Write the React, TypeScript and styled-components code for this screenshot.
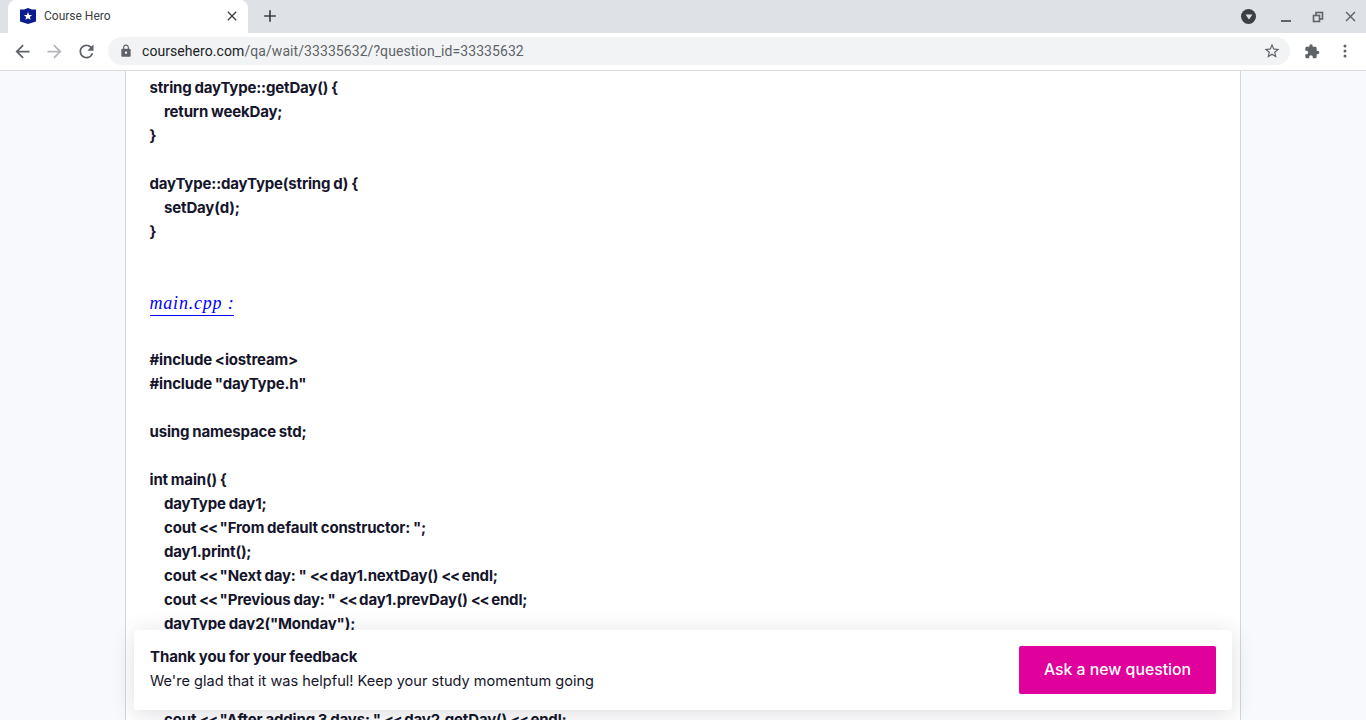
import React from 'react';
import styled, { createGlobalStyle } from 'styled-components';
import {
  MdAdd,
  MdArrowBack,
  MdArrowForward,
  MdClose,
  MdExtension,
  MdLock,
  MdRefresh,
  MdStarBorder,
} from 'react-icons/md';

const GlobalStyle = createGlobalStyle`
  html, body {
    margin: 0;
    padding: 0;
    height: 100%;
    overflow: hidden;
    background: #f8f9fc;
  }
  * { box-sizing: border-box; }
`;

const Window = styled.div`
  width: 1366px;
  height: 720px;
  display: flex;
  flex-direction: column;
  overflow: hidden;
  position: relative;
  font-family: Inter, "Liberation Sans", sans-serif;
`;

const TabStrip = styled.div`
  height: 33px;
  flex: none;
  background: #dee1e6;
  display: flex;
  align-items: flex-end;
  padding-left: 8px;
`;

const Tab = styled.div`
  width: 240px;
  height: 33px;
  background: #fff;
  border-radius: 8px 8px 0 0;
  display: flex;
  align-items: center;
  padding: 0 8px 1px 12px;
  font-family: Roboto, sans-serif;
  font-size: 12px;
  color: #3c4043;
`;

const TabTitle = styled.span`
  margin-left: 8px;
  flex: 1;
`;

const NewTab = styled.div`
  width: 28px;
  height: 28px;
  margin: 0 0 2px 8px;
  align-self: center;
  display: flex;
  align-items: center;
  justify-content: center;
  color: #3c4043;
`;

const WindowControls = styled.div`
  margin-left: auto;
  height: 33px;
  display: flex;
  align-items: center;
  color: #5f6368;
`;

const ProfileDot = styled.div`
  width: 15px;
  height: 15px;
  margin-right: 14px;
  border-radius: 50%;
  background: #3c4043;
  display: flex;
  align-items: center;
  justify-content: center;
`;

const ControlSlot = styled.div`
  width: 32px;
  height: 33px;
  display: flex;
  align-items: center;
  justify-content: center;
`;

const MinimizeBar = styled.div`
  width: 10px;
  height: 2px;
  margin-top: 9px;
  background: #5f6368;
`;

const Toolbar = styled.div`
  height: 38px;
  flex: none;
  background: #fff;
  border-bottom: 1px solid #dadce0;
  display: flex;
  align-items: center;
  padding: 0 0 1px 6px;
`;

const NavButton = styled.div<{ $off?: boolean }>`
  width: 32px;
  height: 30px;
  display: flex;
  align-items: center;
  justify-content: center;
  color: ${(props) => (props.$off ? '#b4b6b9' : '#5f6368')};
`;

const Omnibox = styled.div`
  width: 1182px;
  height: 28px;
  margin-left: 6px;
  border-radius: 14px;
  background: #f1f3f4;
  display: flex;
  align-items: center;
  padding: 0 9px 0 11px;
  font-family: Roboto, sans-serif;
  font-size: 14px;
  color: #5f6368;
`;

const Url = styled.div`
  margin-left: 9px;
  flex: 1;
  letter-spacing: 0.07px;
`;

const Host = styled.span`
  color: #202124;
`;

const ToolIcon = styled.div<{ $gap?: number }>`
  width: 16px;
  height: 16px;
  margin-left: ${(props) => props.$gap || 0}px;
  display: flex;
  align-items: center;
  justify-content: center;
  color: #5f6368;
`;

const Page = styled.div`
  flex: 1;
  background: #f8f9fc;
  display: flex;
  justify-content: center;
  min-height: 0;
`;

const Panel = styled.div`
  width: 1116px;
  margin-right: 1px;
  background: #fff;
  border-left: 1px solid #d3d6db;
  border-right: 1px solid #d3d6db;
  padding: 5px 23px 0 24px;
  overflow: hidden;
`;

const CodeLine = styled.div<{ $indent?: boolean }>`
  height: 24px;
  line-height: 24px;
  font-size: 15px;
  font-weight: 700;
  letter-spacing: -0.16px;
  word-spacing: -0.5px;
  color: #15152b;
  white-space: pre;
  padding-left: ${(props) => (props.$indent ? 14.5 : 0)}px;
`;

const Shift = styled.span`
  letter-spacing: -1.4px;
`;

const MathBlock = styled.div`
  height: 104px;
  padding-top: 48px;
`;

const MathLink = styled.span`
  display: inline-block;
  height: 24px;
  line-height: 23px;
  font-family: "Liberation Serif", serif;
  font-style: italic;
  font-size: 18px;
  letter-spacing: 0.8px;
  color: #0000ff;
  border-bottom: 1px solid #0000ff;
`;

const Banner = styled.div`
  position: absolute;
  left: 134px;
  top: 630px;
  width: 1098px;
  height: 80px;
  background: #fff;
  border-radius: 3px;
  box-shadow: 0 4px 24px rgba(20, 20, 50, 0.14);
  display: flex;
  align-items: center;
  justify-content: space-between;
  padding: 0 16px;
`;

const BannerCopy = styled.div`
  padding-bottom: 2px;
`;

const BannerTitle = styled.div`
  font-size: 15px;
  font-weight: 700;
  letter-spacing: -0.1px;
  word-spacing: -0.2px;
  line-height: 24px;
  color: #15152b;
`;

const BannerText = styled.div`
  font-size: 14.56px;
  line-height: 24px;
  color: #15152b;
`;

const AskButton = styled.button`
  width: 197px;
  height: 48px;
  padding: 0 0 2px;
  border: none;
  border-radius: 2px;
  background: #e0009b;
  color: #fff;
  font-family: inherit;
  font-size: 15.8px;
  font-weight: 500;
  cursor: pointer;
`;

const codeTop = [
  { text: 'string dayType::getDay() {' },
  { text: 'return weekDay;', indent: true },
  { text: '}' },
  { text: ' ' },
  { text: 'dayType::dayType(string d) {' },
  { text: 'setDay(d);', indent: true },
  { text: '}' },
];

const codeBottom = [
  { text: '#include <iostream>' },
  { text: '#include "dayType.h"' },
  { text: ' ' },
  { text: 'using namespace std;' },
  { text: ' ' },
  { text: 'int main() {' },
  { text: 'dayType day1;', indent: true },
  { text: 'cout << "From default constructor: ";', indent: true },
  { text: 'day1.print();', indent: true },
  { text: 'cout << "Next day: " << day1.nextDay() << endl;', indent: true },
  { text: 'cout << "Previous day: " << day1.prevDay() << endl;', indent: true },
  { text: 'dayType day2("Monday");', indent: true },
  { text: 'cout << "From constructor: ";', indent: true },
  { text: 'day2.print();', indent: true },
  { text: 'day2.addDays(3);', indent: true },
  { text: 'cout << "After adding 3 days: " << day2.getDay() << endl;', indent: true },
];

// "<<" sets tighter in the page's font than in ours
const renderCode = (text: string) =>
  text.split('<<').map((part, i) => (
    <React.Fragment key={i}>
      {i > 0 && <Shift>{'<<'}</Shift>}
      {part}
    </React.Fragment>
  ));

const Favicon = () => (
  <svg width="16" height="16" viewBox="0 0 16 16">
    <path d="M0 1.5 L4 1.5 L8 0 L12 1.5 L16 1.5 L16 13.5 L8 16 L0 13.5 Z" fill="#0b1d8c" />
    <path
      d="M8 4 L9.1 6.9 L12.1 7 L9.8 8.9 L10.6 11.8 L8 10.2 L5.4 11.8 L6.2 8.9 L3.9 7 L6.9 6.9 Z"
      fill="#fff"
    />
  </svg>
);

const RestoreIcon = () => (
  <svg width="12" height="12" viewBox="0 0 12 12" fill="none" stroke="#5f6368" strokeWidth="1.6">
    <rect x="4" y="1.5" width="6.5" height="6.5" />
    <rect x="1.5" y="4.5" width="6" height="6" fill="#dee1e6" />
  </svg>
);

const Dots = () => (
  <svg width="4" height="14" viewBox="0 0 4 14" fill="#5f6368">
    <circle cx="2" cy="2" r="1.5" />
    <circle cx="2" cy="7" r="1.5" />
    <circle cx="2" cy="12" r="1.5" />
  </svg>
);

export default function App() {
  return (
    <Window>
      <GlobalStyle />
      <TabStrip>
        <Tab>
          <Favicon />
          <TabTitle>Course Hero</TabTitle>
          <MdClose size={16} color="#3c4043" />
        </Tab>
        <NewTab>
          <MdAdd size={20} />
        </NewTab>
        <WindowControls>
          <ProfileDot>
            <svg width="8" height="6" viewBox="0 0 8 6">
              <path d="M0.5 0.5 H7.5 L4 5.5 Z" fill="#dee1e6" />
            </svg>
          </ProfileDot>
          <ControlSlot>
            <MinimizeBar />
          </ControlSlot>
          <ControlSlot>
            <RestoreIcon />
          </ControlSlot>
          <ControlSlot>
            <MdClose size={17} />
          </ControlSlot>
        </WindowControls>
      </TabStrip>
      <Toolbar>
        <NavButton>
          <MdArrowBack size={21} />
        </NavButton>
        <NavButton $off>
          <MdArrowForward size={21} />
        </NavButton>
        <NavButton>
          <MdRefresh size={21} />
        </NavButton>
        <Omnibox>
          <MdLock size={14} />
          <Url>
            <Host>coursehero.com</Host>/qa/wait/33335632/?question_id=33335632
          </Url>
          <MdStarBorder size={18} />
        </Omnibox>
        <ToolIcon $gap={14}>
          <MdExtension size={17} />
        </ToolIcon>
        <ToolIcon $gap={17}>
          <Dots />
        </ToolIcon>
      </Toolbar>
      <Page>
        <Panel>
          {codeTop.map((line, i) => (
            <CodeLine key={i} $indent={line.indent}>
              {line.text}
            </CodeLine>
          ))}
          <MathBlock>
            <MathLink>main.cpp :</MathLink>
          </MathBlock>
          {codeBottom.map((line, i) => (
            <CodeLine key={i} $indent={line.indent}>
              {renderCode(line.text)}
            </CodeLine>
          ))}
        </Panel>
      </Page>
      <Banner>
        <BannerCopy>
          <BannerTitle>Thank you for your feedback</BannerTitle>
          <BannerText>We're glad that it was helpful! Keep your study momentum going</BannerText>
        </BannerCopy>
        <AskButton>Ask a new question</AskButton>
      </Banner>
    </Window>
  );
}
